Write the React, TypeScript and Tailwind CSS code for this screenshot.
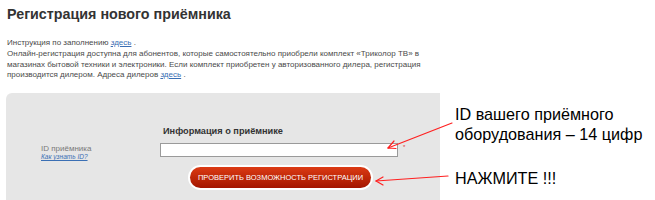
const FONT = "font-['Liberation_Sans',Arial,sans-serif]";

function Arrows() {
  return (
    <svg
      className="pointer-events-none absolute inset-0"
      width="655"
      height="200"
      viewBox="0 0 655 200"
      fill="none"
      stroke="#ff2020"
      strokeWidth="1.2"
      strokeLinecap="round"
    >
      <path d="M452 123 L388 148" />
      <path d="M388 148 L394 141 M388 148 L396 148.5" />
      <path d="M448 176 L376 181" />
      <path d="M376 181 L383 177 M376 181 L383 185" />
    </svg>
  );
}

export default function App() {
  return (
    <div className={`relative h-[200px] w-[655px] overflow-hidden bg-white ${FONT}`}>
      <div className="flex">
        <div className="w-[440px] shrink-0">
          <h1 className="pl-[7px] pt-[5px] text-[14.3px] font-bold leading-[18px] text-[#333]">
            Регистрация нового приёмника
          </h1>

          <div className="pl-[7px] pt-[15px] text-[8px] leading-[10.3px] text-[#4a4a4a]">
            <p>
              Инструкция по заполнению{" "}
              <a href="#" className="text-[#3a6fb4] underline">
                здесь
              </a>{" "}
              .
            </p>
            <p className="mt-[1px]">
              Онлайн-регистрация доступна для абонентов, которые самостоятельно приобрели комплект «Триколор ТВ» в
              магазинах бытовой техники и электроники. Если комплект приобретен у авторизованного дилера, регистрация
              производится дилером. Адреса дилеров{" "}
              <a href="#" className="text-[#3a6fb4] underline">
                здесь
              </a>{" "}
              .
            </p>
          </div>

          <section className="ml-[6px] mt-[13px] h-[120px] rounded-tl-[6px] bg-[#e6e6e6] pt-[33px]">
            <h3 className="pl-[157px] text-[9.2px] font-bold leading-[11px] text-[#333]">Информация о приёмнике</h3>

            <div className="mt-[6px] flex items-start">
              <div className="w-[154px] shrink-0 pl-[35px] pt-[1px]">
                <div className="text-[8px] leading-[9px] text-[#7a7a7a]">ID приёмника</div>
                <a href="#" className="block text-[6.5px] italic leading-[8px] text-[#3a6fb4] underline">
                  Как узнать ID?
                </a>
              </div>
              <input
                type="text"
                className="h-[14px] w-[238px] border border-[#9a9a9a] bg-white outline-none"
              />
              <span className="ml-[5px] mt-[1px] text-[6px] leading-[6px] text-[#e03030]">*</span>
            </div>

            <button
              type="button"
              className="ml-[184px] mt-[6px] flex h-[21px] w-[181px] items-center justify-center rounded-full bg-gradient-to-b from-[#dc3a14] to-[#a31400] text-[7.5px] uppercase text-white ring-2 ring-white"
            >
              Проверить возможность регистрации
            </button>
          </section>
        </div>

        <div className="whitespace-nowrap pl-[15px] pt-[104px] text-[16.2px] leading-[20px] text-black">
          <p>
            ID вашего приёмного
            <br />
            оборудования – 14 цифр
          </p>
          <p className="mt-[24px]">НАЖМИТЕ !!!</p>
        </div>
      </div>

      <Arrows />
    </div>
  );
}
